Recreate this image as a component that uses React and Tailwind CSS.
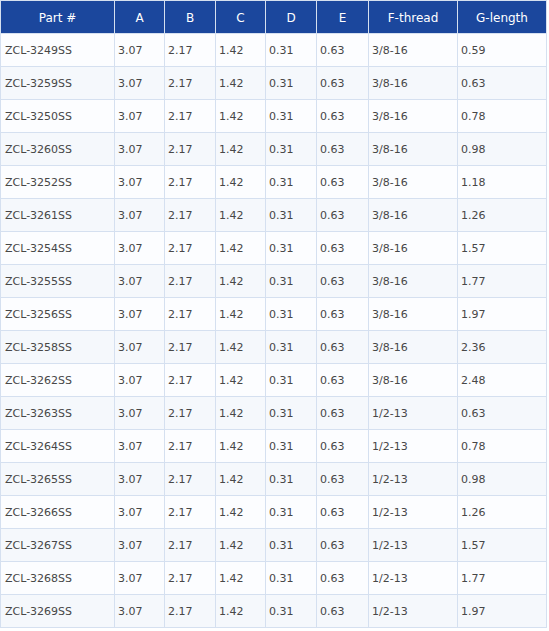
import React from "react";

const parts = [
  ["ZCL-3249SS", "3/8-16", "0.59"],
  ["ZCL-3259SS", "3/8-16", "0.63"],
  ["ZCL-3250SS", "3/8-16", "0.78"],
  ["ZCL-3260SS", "3/8-16", "0.98"],
  ["ZCL-3252SS", "3/8-16", "1.18"],
  ["ZCL-3261SS", "3/8-16", "1.26"],
  ["ZCL-3254SS", "3/8-16", "1.57"],
  ["ZCL-3255SS", "3/8-16", "1.77"],
  ["ZCL-3256SS", "3/8-16", "1.97"],
  ["ZCL-3258SS", "3/8-16", "2.36"],
  ["ZCL-3262SS", "3/8-16", "2.48"],
  ["ZCL-3263SS", "1/2-13", "0.63"],
  ["ZCL-3264SS", "1/2-13", "0.78"],
  ["ZCL-3265SS", "1/2-13", "0.98"],
  ["ZCL-3266SS", "1/2-13", "1.26"],
  ["ZCL-3267SS", "1/2-13", "1.57"],
  ["ZCL-3268SS", "1/2-13", "1.77"],
  ["ZCL-3269SS", "1/2-13", "1.97"],
];

const headers = ["Part #", "A", "B", "C", "D", "E", "F-thread", "G-length"];

export default function App() {
  return (
    <div className="bg-white w-[549px] h-[631px]" style={{ fontFamily: '"DejaVu Sans", Verdana, sans-serif' }}>
      <div className="inline-grid grid-cols-[113px_49px_50px_49px_50px_51px_88px_88px] auto-rows-[32px] gap-px p-px bg-[#d5e0f0]">
        {headers.map((h) => (
          <div key={h} className="bg-[#1b479d] text-white text-[12px] flex items-center justify-center pt-[2px]">
            {h}
          </div>
        ))}
        {parts.map((p, i) => {
          const bg = i % 2 === 0 ? "bg-[#fcfdff]" : "bg-[#f5f8fc]";
          const cells = [p[0], "3.07", "2.17", "1.42", "0.31", "0.63", p[1], p[2]];
          return cells.map((c, j) => (
            <div
              key={i + "-" + j}
              className={`${bg} text-[#474747] text-[11px] flex items-center pt-[3px] ${j === 0 ? "pl-[4px]" : "pl-[3px]"}`}
            >
              {c}
            </div>
          ));
        })}
      </div>
    </div>
  );
}
